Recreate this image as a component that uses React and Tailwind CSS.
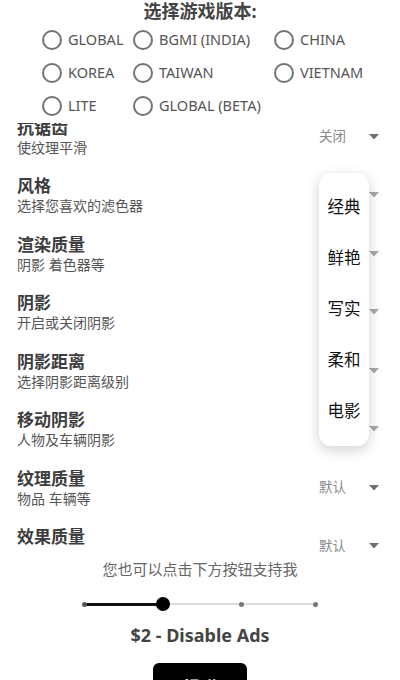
import React from "react";

const FONT = { fontFamily: '"Noto Sans", "Noto Sans CJK SC", sans-serif' };

const VERSIONS = [
  ["GLOBAL", "BGMI (INDIA)", "CHINA"],
  ["KOREA", "TAIWAN", "VIETNAM"],
  ["LITE", "GLOBAL (BETA)"],
];

const SETTINGS = [
  { title: "抗锯齿", sub: "使纹理平滑", value: "关闭" },
  { title: "风格", sub: "选择您喜欢的滤色器", value: "", faded: true },
  { title: "渲染质量", sub: "阴影 着色器等", value: "", faded: true },
  { title: "阴影", sub: "开启或关闭阴影", value: "", faded: true },
  { title: "阴影距离", sub: "选择阴影距离级别", value: "", faded: true },
  { title: "移动阴影", sub: "人物及车辆阴影", value: "", faded: true },
  { title: "纹理质量", sub: "物品 车辆等", value: "默认" },
  { title: "效果质量", sub: "", value: "默认" },
];

const STYLES = ["经典", "鲜艳", "写实", "柔和", "电影"];

function Radio({ label, width }) {
  return (
    <div className={`flex items-center ${width}`}>
      <span className="h-[20px] w-[20px] shrink-0 rounded-full border-2 border-[#737373]" />
      <span className="ml-[6px] whitespace-nowrap text-[14.5px] text-[#555]">{label}</span>
    </div>
  );
}

function Caret({ faded }) {
  return (
    <svg width="10" height="6" viewBox="0 0 10 6" className="shrink-0">
      <path d="M0 0 L10 0 L5 5.5 Z" fill={faded ? "#a8a8a8" : "#6f6f6f"} />
    </svg>
  );
}

function SettingRow({ title, sub, value, faded }) {
  return (
    <div className="flex h-[58.5px] items-start justify-between pl-[17px] pr-[21px] pt-[8px]">
      <div className="flex flex-col">
        <span className="text-[17px] font-bold leading-[22px] text-[#3d3d3d]">{title}</span>
        {sub && <span className="text-[14px] leading-[18px] text-[#555]">{sub}</span>}
      </div>
      <div className="flex h-[40px] items-center">
        <span className="w-[50px] text-[13.5px] text-[#8a8a8a]">{value}</span>
        <Caret faded={faded} />
      </div>
    </div>
  );
}

export default function App() {
  return (
    <div style={FONT} className="relative h-[680px] overflow-hidden bg-white">
      <section className="h-[123px]">
        <h1 className="text-center text-[18px] font-bold leading-[22px] text-[#444]">选择游戏版本:</h1>
        <div className="mt-[1.5px] pl-[42px]">
          {VERSIONS.map((row, i) => (
            <div key={i} className="flex h-[33px] items-center">
              {row.map((label, j) => (
                <Radio key={label} label={label} width={j === 0 ? "w-[91px]" : j === 1 ? "w-[141px]" : ""} />
              ))}
            </div>
          ))}
        </div>
      </section>

      <section className="relative h-[429px] overflow-hidden">
        <div className="-mt-[14.5px]">
          {SETTINGS.map((s) => (
            <SettingRow key={s.title} {...s} />
          ))}
        </div>
      </section>

      <div className="absolute left-[319px] top-[173px] w-[50px] rounded-xl bg-white py-[9px] shadow-[0_4px_14px_rgba(0,0,0,0.18)]">
        {STYLES.map((s) => (
          <div key={s} className="flex h-[51px] items-center justify-center text-[16.5px] text-[#111]">{s}</div>
        ))}
      </div>

      <p className="mt-[6px] text-center text-[15px] leading-[22px] text-[#666]">您也可以点击下方按钮支持我</p>

      <div className="relative mx-auto mt-[17px] h-[14px] w-[241px] px-[4px]">
        <div className="absolute left-[4px] right-[4px] top-[6px] h-[2px] bg-[#dcdcdc]" />
        <div className="absolute left-[4px] top-[5.5px] h-[3px] w-[78px] bg-[#111]" />
        <div className="relative flex h-full items-center justify-between">
          <span className="-ml-[2px] h-[5px] w-[5px] rounded-full bg-[#555]" />
          <span className="h-[14px] w-[14px] rounded-full bg-black" />
          <span className="h-[5px] w-[5px] rounded-full bg-[#777]" />
          <span className="-mr-[2px] h-[5px] w-[5px] rounded-full bg-[#777]" />
        </div>
      </div>

      <p className="mt-[11px] text-center text-[18px] font-bold leading-[26px] text-[#444]">$2 - Disable Ads</p>

      <div className="mt-[15px] flex justify-center">
        <button type="button" className="h-[50px] w-[94px] rounded-md bg-black text-[17px] font-bold text-white">捐赠</button>
      </div>
    </div>
  );
}
